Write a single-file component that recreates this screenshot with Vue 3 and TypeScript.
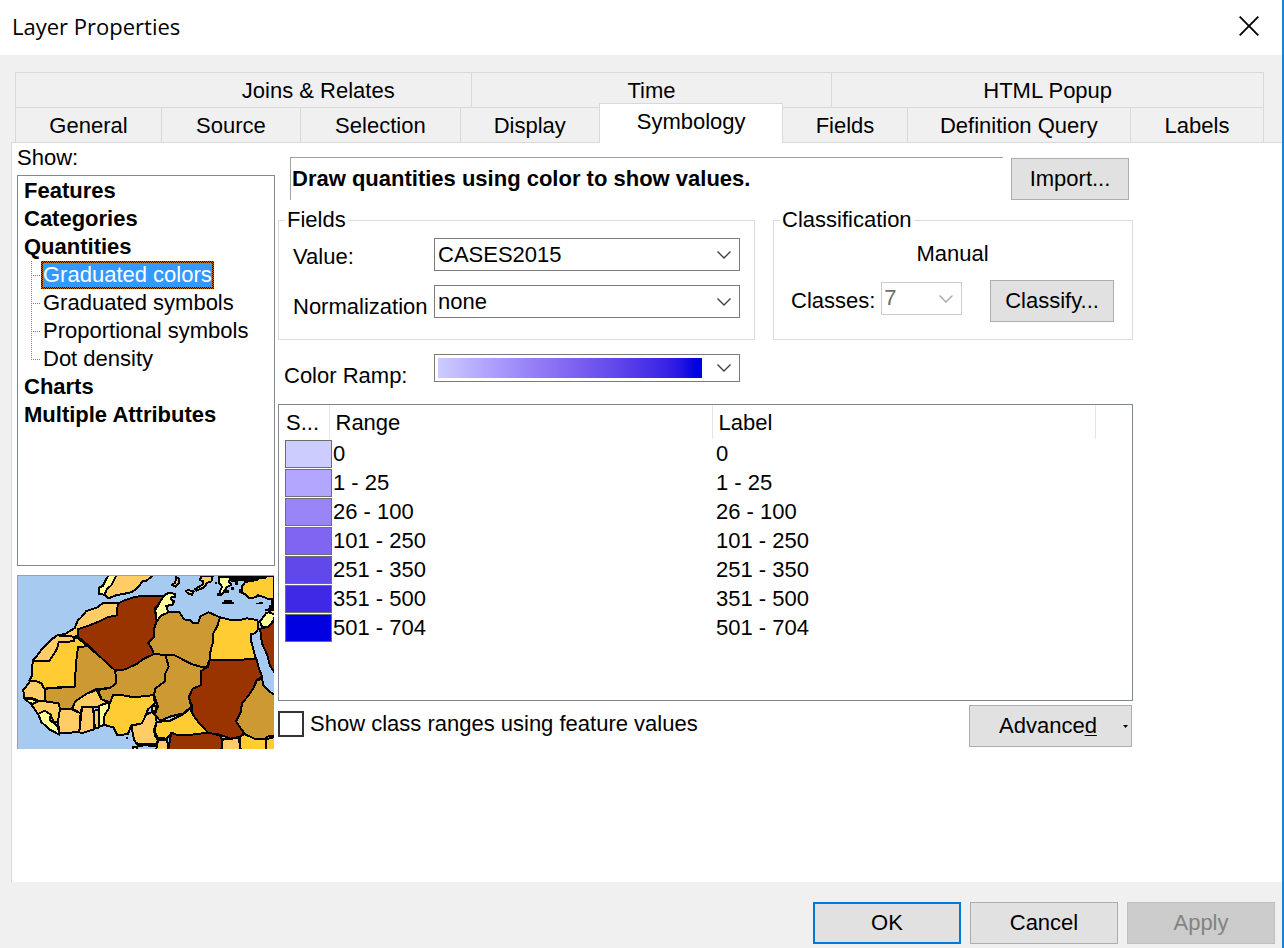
<script setup lang="ts">
import { ref } from 'vue'

interface Tab {
  name: string
  span: number
  active?: boolean
  indent?: boolean
}
interface TreeNode {
  name: string
  children?: string[]
}
interface RangeRow {
  text: string
  color: string
}
interface Shape {
  fill: string
  points: string
}

const backTabs: Tab[] = [
  { name: 'Joins & Relates', span: 456, indent: true },
  { name: 'Time', span: 361 },
  { name: 'HTML Popup', span: 432 },
]
const frontTabs: Tab[] = [
  { name: 'General', span: 146 },
  { name: 'Source', span: 139 },
  { name: 'Selection', span: 160 },
  { name: 'Display', span: 139 },
  { name: 'Symbology', span: 184, active: true },
  { name: 'Fields', span: 124 },
  { name: 'Definition Query', span: 224 },
  { name: 'Labels', span: 133 },
]

const tree: TreeNode[] = [
  { name: 'Features' },
  { name: 'Categories' },
  {
    name: 'Quantities',
    children: ['Graduated colors', 'Graduated symbols', 'Proportional symbols', 'Dot density'],
  },
  { name: 'Charts' },
  { name: 'Multiple Attributes' },
]
const selected = ref('Graduated colors')

const ranges: RangeRow[] = [
  { text: '0', color: '#ccccff' },
  { text: '1 - 25', color: '#b3a6ff' },
  { text: '26 - 100', color: '#9a85f7' },
  { text: '101 - 250', color: '#8065f2' },
  { text: '251 - 350', color: '#6148eb' },
  { text: '351 - 500', color: '#3f28e6' },
  { text: '501 - 704', color: '#0000e0' },
]

const valueField = ref('CASES2015')
const normalization = ref('none')
const classes = ref('7')
const ramp = ref('')
const useFeatureValues = ref(false)

const sand = '#ffcc66'
const gold = '#ffcc33'
const cream = '#ffff99'
const tan = '#cc9933'
const rust = '#993300'

const countries: Shape[] = [
  { fill: sand, points: '318,44 430,44 410,62 398,64 384,82 366,96 340,102 320,105 296,115 284,104 290,88 304,76' },
  { fill: cream, points: '296,44 320,44 304,76 290,88 284,104 268,102 268,82 278,78' },
  { fill: sand, points: '498,52 508,56 508,68 496,80 486,74 496,68' },
  { fill: sand, points: '527,94 534,90 552,94 546,104 534,100' },
  { fill: sand, points: '574,48 608,48 604,64 592,68 582,82 560,92 554,88 580,72 580,64 570,60' },
  { fill: cream, points: '628,50 660,50 658,66 664,74 650,82 642,96 634,106 630,94 636,80 628,70' },
  { fill: gold, points: '792,44 792,116 772,116 764,112 744,106 736,112 716,114 708,104 696,98 696,78 706,66 730,62 744,56 770,50' },
  { fill: sand, points: '326,130 278,130 262,142 228,154 214,172 204,180 194,204 166,222 142,226 192,230 204,228 204,208 238,196 268,184 292,172 320,166 320,150' },
  { fill: sand, points: '142,226 192,230 192,244 146,246 142,264 136,276 118,302 68,302 82,286 100,262 122,240' },
  { fill: gold, points: '68,302 118,302 136,276 142,264 146,246 192,244 192,232 206,236 232,258 204,262 198,310 194,380 112,384 104,390 94,370 80,364 58,362 66,346' },
  { fill: rust, points: '326,130 340,122 370,112 400,107 462,107 450,126 434,146 440,182 432,208 432,230 414,248 424,264 432,282 400,297 380,312 345,328 316,332 296,314 270,290 240,260 220,244 204,230 204,208 238,196 268,184 292,172 320,166 320,150' },
  { fill: cream, points: '462,107 476,98 496,102 496,110 484,112 482,118 492,124 488,134 468,138 476,158 454,166 452,182 440,184 436,150 450,126' },
  { fill: tan, points: '476,157 508,157 522,178 544,182 550,190 564,190 572,168 596,157 630,172 622,198 610,220 608,250 602,270 599,300 590,320 572,320 544,312 494,286 466,285 432,282 424,264 414,248 432,230 432,208 440,184 454,166' },
  { fill: gold, points: '630,172 664,180 690,180 710,175 742,180 746,206 734,220 724,222 724,246 738,298 599,300 602,270 608,250 610,220 622,198' },
  { fill: tan, points: '204,262 232,258 270,290 296,314 316,332 318,370 300,384 256,388 232,400 196,424 186,446 150,448 146,430 106,424 106,386 194,380 198,310' },
  { fill: tan, points: '316,332 345,328 380,312 400,297 432,282 466,285 476,320 466,340 464,364 436,386 432,405 372,412 334,405 310,405 300,426 276,420 264,390 300,384 318,370' },
  { fill: tan, points: '466,285 494,286 544,312 572,320 592,322 572,334 572,376 548,386 536,412 544,440 520,460 480,470 450,482 434,464 444,440 432,405 436,386 464,364 466,340 476,320' },
  { fill: rust, points: '599,300 740,298 746,322 756,350 738,362 732,382 716,406 696,430 692,456 678,484 702,518 690,530 662,536 630,524 596,520 568,490 546,462 546,436 536,412 548,386 572,376 572,334 594,320' },
  { fill: tan, points: '740,362 756,356 760,376 778,394 796,406 796,530 776,528 764,538 734,536 710,526 700,516 678,484 692,456 696,430 716,406 732,382' },
  { fill: rust, points: '750,206 776,200 796,180 796,340 780,318 772,286 756,250' },
  { fill: cream, points: '756,200 750,184 768,160 784,154 796,166 790,182 776,200' },
  { fill: sand, points: '776,148 796,148 796,164 780,158' },
  { fill: gold, points: '310,405 334,405 372,412 432,405 434,430 414,448 408,464 396,490 364,496 354,522 322,526 310,502 280,494 284,462 300,428' },
  { fill: sand, points: '424,440 440,436 436,454 426,450' },
  { fill: sand, points: '426,456 436,466 440,486 432,510 436,530 444,540 438,552 386,558 372,540 364,498 396,490 408,464' },
  { fill: gold, points: '440,486 480,482 520,462 540,446 556,476 594,518 546,524 500,524 484,520 470,536 444,534 434,514' },
  { fill: rust, points: '484,518 500,524 546,524 594,518 630,526 636,540 634,572 474,572 480,540' },
  { fill: sand, points: '444,540 472,540 474,572 438,572' },
  { fill: sand, points: '638,538 686,534 692,572 634,572' },
  { fill: gold, points: '690,530 702,522 734,536 768,538 768,572 692,572' },
  { fill: gold, points: '768,538 796,530 796,572 768,572' },
  { fill: sand, points: '60,364 80,364 94,370 106,392 104,422 84,422 66,414 42,414 40,390' },
  { fill: cream, points: '44,416 66,416 82,424 70,432 58,428' },
  { fill: sand, points: '64,434 84,424 106,424 146,430 150,448 144,484 132,488 122,464 104,452 84,462' },
  { fill: cream, points: '84,462 104,452 122,464 120,480 144,500 148,524 118,508 94,486' },
  { fill: sand, points: '150,448 186,448 212,460 208,516 148,520 144,484' },
  { fill: sand, points: '186,446 196,424 232,400 260,390 274,418 296,426 262,440 216,440 212,460' },
  { fill: sand, points: '216,442 250,440 252,508 214,520 208,516' },
  { fill: sand, points: '252,452 266,450 268,502 254,506' },
  { fill: cream, points: '266,438 296,428 298,444 284,464 280,496 266,500' },
  { fill: cream, points: '368,560 382,560 382,572 368,572' },
]

const islands = [
  'M660,47H792V52H768V58H744V62H722V66H704V62H684V74H676V66H664Z',
  'M636,125H642V120H666V126H672V131H636Z',
  'M738,128H746V125H760V133H738Z',
  'M784,114H792V152H766V146H776V134H784Z',
  'M664,82H672V90H664ZM640,90H658V98H640ZM622,98H632V108H622ZM614,66H622V72H614ZM686,88H694V98H686Z',
  'M348,532H354V537H348ZM374,546H384V552H374ZM384,550H442V562H414V556H384Z',
]
</script>

<template>
  <main class="dialog">
    <header class="titlebar">
      <h1>Layer Properties</h1>
      <button class="close" type="button" aria-label="Close">
        <svg width="20" height="20" viewBox="0 0 20 20" aria-hidden="true">
          <path d="M.7.7 19.3 19.3M19.3.7.7 19.3" fill="none" stroke="#000" stroke-width="1.8" />
        </svg>
      </button>
    </header>

    <nav class="tabs" role="tablist" aria-label="Layer property pages">
      <div class="tab-row">
        <button
          v-for="tab in backTabs"
          :key="tab.name"
          class="tab"
          :class="{ indent: tab.indent }"
          type="button"
          role="tab"
          :style="{ flexGrow: tab.span }"
        ><span>{{ tab.name }}</span></button>
      </div>
      <div class="tab-row">
        <button
          v-for="tab in frontTabs"
          :key="tab.name"
          class="tab"
          :class="{ active: tab.active }"
          type="button"
          role="tab"
          :aria-selected="!!tab.active"
          :style="{ flexGrow: tab.span }"
        ><span>{{ tab.name }}</span></button>
      </div>
    </nav>

    <section class="page">
      <aside class="side">
        <h2 id="show-label">Show:</h2>
        <ul class="tree" role="tree" aria-labelledby="show-label">
          <li v-for="node in tree" :key="node.name" role="treeitem">
            <button class="node" type="button">{{ node.name }}</button>
            <ul v-if="node.children" class="branch" role="group">
              <li v-for="child in node.children" :key="child" role="treeitem">
                <button
                  class="leaf"
                  :class="{ selected: child === selected }"
                  type="button"
                  @click="selected = child"
                >{{ child }}</button>
              </li>
            </ul>
          </li>
        </ul>
        <svg class="map" viewBox="21 45 771 522" role="img" aria-label="Graduated color map" shape-rendering="crispEdges">
          <rect x="21" y="45" width="771" height="522" fill="#a6caf0" />
          <g stroke="#000" stroke-width="6" stroke-linejoin="round">
            <polygon v-for="shape in countries" :key="shape.points" :points="shape.points" :fill="shape.fill" />
          </g>
          <path v-for="island in islands" :key="island" :d="island" fill="#000" />
          <path d="M22.500 567V46.500H792" fill="none" stroke="#a0a0a0" stroke-width="3" />
        </svg>
      </aside>

      <div class="content">
        <div class="intro">
          <p>Draw quantities using color to show values.</p>
          <button class="btn import" type="button">Import...</button>
        </div>

        <div class="groups">
          <fieldset>
            <legend>Fields</legend>
            <div class="fields">
              <div class="labels">
                <label for="value">Value:</label>
                <label for="normalization">Normalization</label>
              </div>
              <div class="inputs">
                <div class="combo">
                  <select id="value" v-model="valueField">
                    <option>CASES2015</option>
                  </select>
                  <svg class="chevron" viewBox="0 0 14 8" aria-hidden="true"><path d="M.5.5 7 7 13.500.5" /></svg>
                </div>
                <div class="combo">
                  <select id="normalization" v-model="normalization">
                    <option>none</option>
                  </select>
                  <svg class="chevron" viewBox="0 0 14 8" aria-hidden="true"><path d="M.5.5 7 7 13.500.5" /></svg>
                </div>
              </div>
            </div>
          </fieldset>

          <fieldset>
            <legend>Classification</legend>
            <div class="classification">
              <p>Manual</p>
              <div class="class-row">
                <label for="classes">Classes:</label>
                <div class="combo disabled">
                  <select id="classes" v-model="classes" disabled>
                    <option>7</option>
                  </select>
                  <svg class="chevron" viewBox="0 0 14 8" aria-hidden="true"><path d="M.5.5 7 7 13.500.5" /></svg>
                </div>
                <button class="btn classify" type="button">Classify...</button>
              </div>
            </div>
          </fieldset>
        </div>

        <div class="ramp-row">
          <label for="ramp">Color Ramp:</label>
          <div class="combo ramp">
            <select id="ramp" v-model="ramp">
              <option value=""></option>
            </select>
            <span class="gradient"></span>
            <svg class="chevron" viewBox="0 0 14 8" aria-hidden="true"><path d="M.5.5 7 7 13.500.5" /></svg>
          </div>
        </div>

        <div class="list">
          <table>
            <thead>
              <tr>
                <th class="symbol-col" scope="col">S...</th>
                <th scope="col">Range</th>
                <th scope="col">Label</th>
                <td class="rest-col"></td>
              </tr>
            </thead>
            <tbody>
              <tr v-for="row in ranges" :key="row.text">
                <td class="symbol"><span class="swatch" :style="{ background: row.color }"></span></td>
                <td>{{ row.text }}</td>
                <td>{{ row.text }}</td>
                <td></td>
              </tr>
            </tbody>
          </table>
        </div>

        <div class="options">
          <label class="check">
            <input v-model="useFeatureValues" type="checkbox" />
            <span>Show class ranges using feature values</span>
          </label>
          <button class="btn advanced" type="button">
            <span>Advance<u>d</u></span>
            <svg width="5" height="3" viewBox="0 0 5 3" aria-hidden="true"><path d="M0 0H5L2.500 3Z" /></svg>
          </button>
        </div>
      </div>
    </section>

    <footer class="actions">
      <button class="btn primary" type="button">OK</button>
      <button class="btn" type="button">Cancel</button>
      <button class="btn" type="button" disabled>Apply</button>
    </footer>
  </main>
</template>

<style>
body {
  margin: 0;
  background: #f0f0f0;
}
</style>

<style scoped>
* {
  box-sizing: border-box;
}
.dialog {
  display: flex;
  flex-direction: column;
  min-height: 100vh;
  border-right: 2px solid #1883d7;
  background: #f0f0f0;
  color: #000;
  font: 22px/26px "Liberation Sans", Arial, sans-serif;
}
h1, h2, p, ul {
  margin: 0;
  padding: 0;
  font: inherit;
  list-style: none;
}
button, select {
  font: inherit;
  color: inherit;
  border-radius: 0;
}
.titlebar {
  display: flex;
  align-items: center;
  justify-content: space-between;
  height: 55px;
  padding: 0 23px 3px 12px;
  background: #fff;
}
.titlebar h1 {
  font: 22px/30px "Open Sans", "Noto Sans", sans-serif;
}
.close {
  display: flex;
  padding: 0;
  border: 0;
  background: none;
}
.tabs {
  margin: 17px 18px 0 15px;
}
.tab-row {
  display: flex;
  height: 35px;
}
.tab {
  display: flex;
  justify-content: center;
  align-items: flex-start;
  flex: 1 1 0;
  padding: 5px 0 0;
  border: 1px solid #d9d9d9;
  border-width: 1px 0 0 1px;
  background: #f0f0f0;
  white-space: nowrap;
}
.tab:last-child {
  border-right-width: 1px;
}
.tab.indent span {
  padding-left: 150px;
}
.tab.active {
  z-index: 1;
  margin: -4px 0 -1px;
  border-right-width: 1px;
  background: #fff;
}
.tab.active + .tab {
  border-left-width: 0;
}
.page {
  display: flex;
  flex: 1;
  gap: 3px;
  margin-left: 11px;
  padding: 2px 149px 20px 5px;
  border: 1px solid #d9d9d9;
  border-width: 1px 0 0 1px;
  background: #fff;
}
.side {
  display: flex;
  flex-direction: column;
  flex: none;
  width: 258px;
}
.tree {
  height: 391px;
  margin: 4px 0 9px;
  padding: 1px 6px;
  border: 1px solid #828790;
}
.node, .leaf {
  display: block;
  height: 28px;
  padding: 0;
  border: 0;
  background: none;
  line-height: 28px;
  white-space: nowrap;
}
.node {
  font-weight: bold;
}
.branch {
  margin-left: 7px;
}
.branch li {
  display: flex;
  background:
    repeating-linear-gradient(#808080 0 1px, transparent 1px 2px) 0 0 / 1px 100% no-repeat,
    repeating-linear-gradient(90deg, #808080 0 1px, transparent 1px 2px) 0 14px / 9px 1px no-repeat;
}
.branch li:last-child {
  background:
    repeating-linear-gradient(#808080 0 1px, transparent 1px 2px) 0 0 / 1px 14px no-repeat,
    repeating-linear-gradient(90deg, #808080 0 1px, transparent 1px 2px) 0 14px / 9px 1px no-repeat;
}
.leaf {
  margin-left: 10px;
  border: 2px solid transparent;
  line-height: 24px;
}
.leaf.selected {
  background:
    linear-gradient(#3399ff, #3399ff) padding-box,
    repeating-conic-gradient(#000 0 25%, #cc6600 0 50%) 0 0 / 2px 2px border-box;
  color: #fff;
}
.map {
  display: block;
  width: 257px;
  height: 174px;
}
.content {
  flex: 1;
  min-width: 0;
  padding-top: 12px;
}
.intro {
  display: flex;
  gap: 8px;
  padding: 0 4px 0 12px;
}
.intro p {
  flex: 1;
  padding: 8px 0 8px 1px;
  border: 1px solid #a0a0a0;
  border-width: 1px 0 0 1px;
  font-weight: bold;
}
.btn {
  height: 42px;
  padding: 0;
  border: 1px solid #adadad;
  background: #e1e1e1;
}
.import {
  width: 118px;
  margin-top: 1px;
}
.groups {
  display: grid;
  grid-template-columns: 477fr 360fr;
  gap: 18px;
  margin-top: 7px;
}
fieldset {
  min-width: 0;
  height: 133px;
  margin: 0;
  padding: 0;
  border: 1px solid #dcdcdc;
}
legend {
  margin-left: 6px;
  padding: 0 2px;
}
.fields {
  display: flex;
  gap: 5px;
  padding: 5px 14px 0;
}
.labels {
  display: flex;
  flex-direction: column;
  gap: 24px;
  width: 136px;
  padding-top: 6px;
}
.labels label {
  white-space: nowrap;
}
.inputs {
  display: flex;
  flex-direction: column;
  flex: 1;
  gap: 14px;
}
.combo {
  display: grid;
  height: 33px;
}
.combo > * {
  grid-area: 1 / 1;
}
.combo select {
  width: 100%;
  height: 100%;
  padding: 0 30px 0 3px;
  border: 1px solid #7a7a7a;
  background: #fff;
  appearance: none;
}
.chevron {
  align-self: center;
  justify-self: end;
  width: 14px;
  height: 8px;
  margin-right: 9px;
  fill: none;
  stroke: #404040;
  stroke-width: 1.4;
  pointer-events: none;
}
.combo.disabled {
  width: 81px;
  margin: 0 auto 5px 6px;
}
.combo.disabled select {
  padding: 0 20px 2px 2px;
  border-color: #cccccc;
  color: #6d6d6d;
  opacity: 1;
}
.disabled .chevron {
  stroke: #a8a8a8;
}
.classification {
  padding: 8px 18px 0 17px;
}
.classification p {
  text-align: center;
}
.class-row {
  display: flex;
  align-items: center;
  margin-top: 13px;
}
.classify {
  width: 124px;
}
.ramp-row {
  display: grid;
  grid-template-columns: 150px 306px;
  align-items: start;
  margin: 14px 0 0 6px;
}
.ramp-row label {
  height: 35px;
  padding-top: 9px;
}
.combo.ramp {
  height: 28px;
}
.gradient {
  align-self: center;
  height: 20px;
  margin: 0 38px 0 4px;
  background: linear-gradient(90deg, #ccccff, #b3a6ff 17%, #9a85f7 33%, #8065f2 50%, #6148eb 67%, #3f28e6 84%, #2a18e4 91%, #0000e0 98%);
  pointer-events: none;
}
.list {
  height: 297px;
  margin-top: 15px;
  border: 1px solid #828790;
}
table {
  width: 100%;
  border-collapse: collapse;
  table-layout: fixed;
}
th {
  height: 34px;
  padding: 2px 0 0 6px;
  border-right: 1px solid #e5e5e5;
  font-weight: normal;
  text-align: left;
}
.symbol-col {
  width: 50px;
  padding-left: 7px;
}
.rest-col {
  width: 37px;
}
tbody td {
  height: 29px;
  padding: 0 0 0 4px;
  line-height: 28px;
}
tbody td.symbol {
  padding: 1px 0 0 6px;
}
.swatch {
  display: block;
  width: 47px;
  height: 28px;
  border: 1px solid #6e6e6e;
}
.options {
  display: flex;
  align-items: flex-start;
  justify-content: space-between;
  margin-top: 4px;
  padding-right: 1px;
}
.check {
  display: flex;
  align-items: center;
  gap: 6px;
  padding-top: 6px;
}
.check input {
  width: 26px;
  height: 26px;
  margin: 0;
  border: 2px solid #333;
  background: #fff;
  appearance: none;
}
.check input:checked {
  box-shadow: inset 0 0 0 4px #fff;
  background: #333;
}
.advanced {
  display: flex;
  align-items: center;
  justify-content: space-between;
  width: 163px;
  padding: 0 3px 0 29px;
}
.advanced u {
  text-decoration-thickness: 1px;
  text-underline-offset: 2px;
}
.actions {
  display: flex;
  justify-content: flex-end;
  gap: 9px;
  padding: 20px 7px 4px;
}
.actions .btn {
  width: 148px;
}
.actions .primary {
  border: 2px solid #0078d7;
}
.actions .btn:disabled {
  border-color: #bfbfbf;
  background: #cccccc;
  color: #838383;
}
</style>
